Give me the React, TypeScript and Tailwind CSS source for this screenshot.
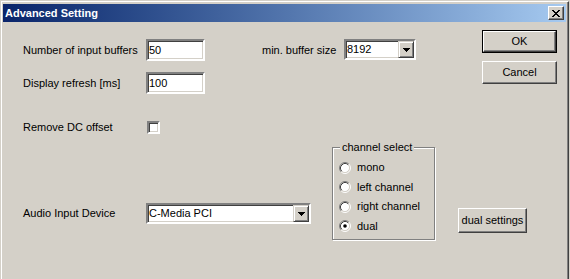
import React from "react";

// Win2k-style bevels
const SUNKEN =
  "border-2 border-t-[#808080] border-l-[#808080] border-b-white border-r-white shadow-[inset_1px_1px_0_#404040,inset_-1px_-1px_0_#d4d0c8]";
const RAISED =
  "border border-t-white border-l-white border-b-[#404040] border-r-[#404040] shadow-[inset_-1px_-1px_0_#808080]";
const DROP_BTN =
  "border border-t-[#d4d0c8] border-l-[#d4d0c8] border-b-[#404040] border-r-[#404040] shadow-[inset_1px_1px_0_#fff,inset_-1px_-1px_0_#808080]";

function Arrow() {
  return (
    <svg width="7" height="4" viewBox="0 0 7 4" shapeRendering="crispEdges">
      <rect x="0" y="0" width="7" height="1" fill="#000" />
      <rect x="1" y="1" width="5" height="1" fill="#000" />
      <rect x="2" y="2" width="3" height="1" fill="#000" />
      <rect x="3" y="3" width="1" height="1" fill="#000" />
    </svg>
  );
}

function Combo({ value, w }: { value: string; w: string }) {
  return (
    <div className={`${SUNKEN} ${w} h-[21px] bg-white flex items-center`}>
      <span className="flex-1 pl-[1px] leading-[13px]">{value}</span>
      <div className={`${DROP_BTN} w-[16px] h-[17px] bg-[#d4d0c8] flex items-center justify-center`}>
        <Arrow />
      </div>
    </div>
  );
}

function TextBox({ value }: { value: string }) {
  return (
    <div className={`${SUNKEN} w-[59px] h-[22px] bg-white flex items-center pl-[1px] leading-[13px]`}>
      {value}
    </div>
  );
}

function Radio({ label, checked }: { label: string; checked?: boolean }) {
  return (
    <div className="flex items-center h-[19.5px]">
      <svg width="12" height="12" viewBox="0 0 12 12">
        <circle cx="6" cy="6" r="4.5" fill="#fff" />
        <path d="M2.11 9.89A5.5 5.5 0 0 1 9.89 2.11" stroke="#808080" fill="none" />
        <path d="M9.89 2.11A5.5 5.5 0 0 1 2.11 9.89" stroke="#fff" fill="none" />
        <path d="M2.82 9.18A4.5 4.5 0 0 1 9.18 2.82" stroke="#404040" fill="none" />
        <path d="M9.18 2.82A4.5 4.5 0 0 1 2.82 9.18" stroke="#d4d0c8" fill="none" />
        {checked && <circle cx="6" cy="6" r="1.8" fill="#000" />}
      </svg>
      <span className="ml-[6px] leading-[13px]">{label}</span>
    </div>
  );
}

function Button({ label, w, h, isDefault }: { label: string; w: string; h: string; isDefault?: boolean }) {
  const inner = (
    <div className={`${RAISED} w-full h-full bg-[#d4d0c8] flex items-center justify-center leading-[13px]`}>{label}</div>
  );
  if (isDefault) return <div className={`${w} ${h} border border-black`}>{inner}</div>;
  return <div className={`${w} ${h}`}>{inner}</div>;
}

export default function App() {
  return (
    <div className="w-[570px] h-[279px] bg-[#d4d0c8] pt-[1px] pl-[1px] pr-[1px] overflow-hidden font-['Liberation_Sans',Arial,sans-serif] text-[11px] text-black">
      <div className="h-full border-t border-l border-white border-r border-r-[#404040]">
        <div className="h-full border-r border-r-[#808080] pt-[2px] pl-[1px] pr-[1px]">
          {/* title bar */}
          <div className="h-[18px] flex items-center bg-gradient-to-r from-[#0a246a] to-[#a6caf0] pl-[2px] pr-[2px]">
            <span className="flex-1 text-white font-bold leading-[13px]">Advanced Setting</span>
            <div className={`${RAISED} w-[16px] h-[14px] bg-[#d4d0c8] flex items-center justify-center`}>
              <svg width="8" height="7" viewBox="0 0 8 7" shapeRendering="crispEdges">
                <path d="M0 0h2v1H0zM6 0h2v1H6zM1 1h2v1H1zM5 1h2v1H5zM2 2h4v1H2zM3 3h2v1H3zM2 4h4v1H2zM1 5h2v1H1zM5 5h2v1H5zM0 6h2v1H0zM6 6h2v1H6z" fill="#000" />
              </svg>
            </div>
          </div>

          {/* upper part */}
          <div className="flex">
            <div className="flex-1 pt-[17px] pl-[20px]">
              <div className="flex items-start h-[22px]">
                <span className="w-[123px] self-center leading-[13px]">Number of input buffers</span>
                <TextBox value="50" />
                <span className="ml-[57px] w-[82px] self-center leading-[13px]">min. buffer size</span>
                <Combo value="8192" w="w-[72px]" />
              </div>
              <div className="flex items-center h-[22px] mt-[11px]">
                <span className="w-[123px] leading-[13px]">Display refresh [ms]</span>
                <TextBox value="100" />
              </div>
              <div className="flex items-center h-[13px] mt-[27px]">
                <span className="w-[124px] leading-[13px]">Remove DC offset</span>
                <div className={`${SUNKEN} w-[13px] h-[13px] bg-white`} />
              </div>
            </div>
            <div className="pt-[8px] pr-[9px] flex flex-col gap-[8px]">
              <Button label="OK" w="w-[75px]" h="h-[23px]" isDefault />
              <Button label="Cancel" w="w-[75px]" h="h-[23px]" />
            </div>
          </div>

          {/* lower part */}
          <div className="flex items-start pl-[20px]">
            <div className="flex items-center mt-[69px]">
              <span className="w-[123px] leading-[13px]">Audio Input Device</span>
              <Combo value="C-Media PCI" w="w-[165px]" />
            </div>
            <div className="relative ml-[21px] mt-[7px] pt-[6px]">
              <div className="w-[103px] h-[93px] border border-[#808080] shadow-[inset_1px_1px_0_#fff,1px_1px_0_#fff] pt-[10px] pl-[6px]">
                <Radio label="mono" />
                <Radio label="left channel" />
                <Radio label="right channel" />
                <Radio label="dual" checked />
              </div>
              <span className="absolute top-0 left-[8px] px-[2px] bg-[#d4d0c8] leading-[13px]">channel select</span>
            </div>
            <div className="ml-[23px] mt-[74px]">
              <Button label="dual settings" w="w-[69px]" h="h-[25px]" />
            </div>
          </div>
        </div>
      </div>
    </div>
  );
}
